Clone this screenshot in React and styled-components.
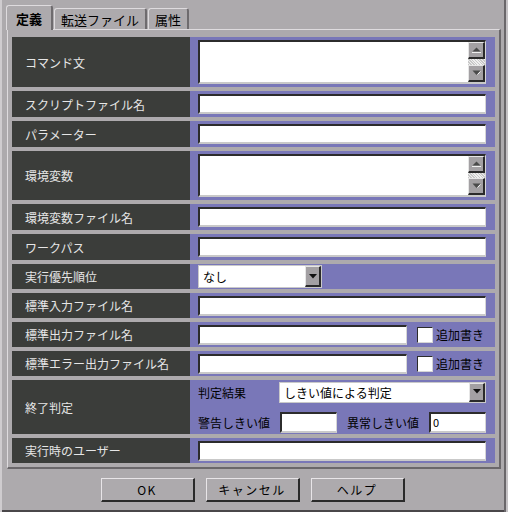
import React from "react";
import styled, { createGlobalStyle } from "styled-components";

const FONT = '"Noto Sans CJK JP", "Noto Sans", "DejaVu Sans", sans-serif';

const GlobalStyle = createGlobalStyle`
  html, body { margin: 0; padding: 0; background: #adaaad; }
  body { font-family: ${FONT}; }
  * { box-sizing: border-box; }
`;

const Window = styled.div`
  width: 508px;
  height: 512px;
  background: #adaaad;
  border-left: 2px solid #cfcccf;
  padding: 4px 7px 0 5px;
  display: flex;
  flex-direction: column;
  box-shadow: inset -2px 0 0 #c4c1c4, inset -4px 0 0 #6a676a,
    inset 0 -2px 0 #4a474a;
  font-family: ${FONT};
`;

const TabBar = styled.div`
  display: flex;
  align-items: flex-end;
  height: 25px;
  margin-left: -1px;
  position: relative;
  z-index: 1;
`;

const Tab = styled.div`
  height: ${(p) => (p.$active ? 25 : 21)}px;
  padding: 0 ${(p) => (p.$active ? 9 : 6)}px;
  margin-right: 1px;
  display: flex;
  align-items: center;
  font-size: 13px;
  font-weight: ${(p) => (p.$active ? 700 : 400)};
  color: #000;
  background: #adaaad;
  border-top: 1px solid #dedbde;
  border-left: 1px solid #dedbde;
  border-right: 2px solid #6e6b6e;
  border-radius: 3px 3px 0 0;
  margin-bottom: ${(p) => (p.$active ? -1 : 0)}px;
  line-height: 1;
`;

const Panel = styled.div`
  border-top: 1px solid #dedbde;
  border-left: 1px solid #dedbde;
  border-right: 2px solid #6a676a;
  border-bottom: 2px solid #6a676a;
  padding: 7px 4px 4px 4px;
`;

const Table = styled.div`
  display: flex;
  flex-direction: column;
  gap: 4px;
`;

const Row = styled.div`
  display: grid;
  grid-template-columns: 178px 305px;
  height: ${(p) => p.$h}px;
`;

const Label = styled.div`
  background: #3b3d3a;
  color: #e6e6e6;
  font-size: 12px;
  display: flex;
  align-items: center;
  padding-left: 13px;
  white-space: nowrap;
`;

const Cell = styled.div`
  background: #7977b8;
  display: flex;
  flex-direction: ${(p) => (p.$column ? "column" : "row")};
  align-items: ${(p) => (p.$column ? "stretch" : "center")};
  justify-content: ${(p) => (p.$column ? "center" : "flex-start")};
  padding-left: 8px;
  padding-right: 9px;
  gap: ${(p) => (p.$column ? 9 : 0)}px;
`;

const Field = styled.input`
  width: ${(p) => p.$w}px;
  height: ${(p) => p.$h || 20}px;
  background: #fff;
  border-top: 2px solid #2c2c2c;
  border-left: 2px solid #2c2c2c;
  border-right: 1px solid #d6d6d6;
  border-bottom: 2px solid #c9c9c9;
  padding: 0 2px;
  font-family: ${FONT};
  font-size: 11px;
  color: #000;
  outline: none;
  flex: none;
`;

const AreaBox = styled.div`
  width: ${(p) => p.$w}px;
  height: ${(p) => p.$h}px;
  background: #fff;
  border-top: 2px solid #2c2c2c;
  border-left: 2px solid #2c2c2c;
  border-right: 1px solid #d6d6d6;
  border-bottom: 2px solid #c9c9c9;
  display: flex;
  justify-content: flex-end;
`;

const ScrollBar = styled.div`
  width: 17px;
  display: flex;
  flex-direction: column;
`;

const ScrollTrack = styled.div`
  flex: 1;
  background-color: #e4e4e4;
  background-image: repeating-linear-gradient(
    45deg,
    #c8c8c8 0 1px,
    #efefef 1px 2px
  );
`;

const BevelButton = styled.div`
  width: ${(p) => p.$w || 17}px;
  height: ${(p) => p.$h || 17}px;
  background: #a3a0a3;
  border-top: 1px solid #e6e6e6;
  border-left: 1px solid #e6e6e6;
  border-right: 2px solid #2a2a2a;
  border-bottom: 2px solid #2a2a2a;
  display: flex;
  align-items: center;
  justify-content: center;
  flex: none;
`;

const Select = styled.div`
  width: ${(p) => p.$w}px;
  height: ${(p) => p.$h}px;
  background: #fff;
  border: 1px solid #c9c9c9;
  display: flex;
  align-items: stretch;
  flex: none;
`;

const SelectText = styled.div`
  flex: 1;
  font-size: 12px;
  color: #000;
  display: flex;
  align-items: center;
  padding-left: 4px;
  white-space: nowrap;
`;

const Line = styled.div`
  display: flex;
  align-items: center;
  height: 21px;
`;

const InlineText = styled.span`
  font-size: 12px;
  color: #000;
  white-space: nowrap;
  width: ${(p) => (p.$w ? `${p.$w}px` : "auto")};
  flex: none;
  margin-left: ${(p) => p.$ml || 0}px;
`;

const Check = styled.div`
  width: 16px;
  height: 16px;
  background: #fff;
  border-top: 1px solid #2c2c2c;
  border-left: 1px solid #2c2c2c;
  border-right: 1px solid #d6d6d6;
  border-bottom: 1px solid #d6d6d6;
  margin-left: 10px;
  margin-right: 3px;
  flex: none;
`;

const Buttons = styled.div`
  display: flex;
  justify-content: center;
  gap: 11px;
  margin-top: 9px;
  margin-left: -3px;
`;

const PushButton = styled.div`
  width: 94px;
  height: 24px;
  background: #adaaad;
  border-top: 1px solid #e8e5e8;
  border-left: 1px solid #e8e5e8;
  border-right: 2px solid #2a2a2a;
  border-bottom: 2px solid #2a2a2a;
  display: flex;
  align-items: center;
  justify-content: center;
  font-size: 12px;
  letter-spacing: 1.5px;
  color: #000;
`;

const Up = () => (
  <svg width="9" height="6" viewBox="0 0 9 6">
    <path d="M4.5 0.5 L8.5 4.5 L0.5 4.5 Z" fill="#4a4a4a" />
    <rect x="0" y="5" width="9" height="1" fill="#f0f0f0" />
  </svg>
);

const Down = () => (
  <svg width="9" height="6" viewBox="0 0 9 6">
    <path d="M0.5 0.5 L8.5 0.5 L4.5 5 Z" fill="#4a4a4a" />
    <path d="M5.5 4.5 L8.5 1.5" stroke="#f0f0f0" strokeWidth="1" />
  </svg>
);

const DropArrow = () => (
  <svg width="8" height="5" viewBox="0 0 8 5">
    <path d="M0 0 L8 0 L4 4.5 Z" fill="#111" />
  </svg>
);

const TextArea = ({ w, h }) => (
  <AreaBox $w={w} $h={h}>
    <ScrollBar>
      <BevelButton>
        <Up />
      </BevelButton>
      <ScrollTrack />
      <BevelButton>
        <Down />
      </BevelButton>
    </ScrollBar>
  </AreaBox>
);

const Dropdown = ({ w, h, text }) => (
  <Select $w={w} $h={h}>
    <SelectText>{text}</SelectText>
    <BevelButton $w={16} $h={h - 2}>
      <DropArrow />
    </BevelButton>
  </Select>
);

export default function App() {
  return (
    <>
      <GlobalStyle />
      <Window>
        <TabBar>
          <Tab $active>定義</Tab>
          <Tab>転送ファイル</Tab>
          <Tab>属性</Tab>
        </TabBar>
        <Panel>
          <Table>
            <Row $h={50}>
              <Label>コマンド文</Label>
              <Cell>
                <TextArea w={288} h={44} />
              </Cell>
            </Row>
            <Row $h={26}>
              <Label>スクリプトファイル名</Label>
              <Cell>
                <Field $w={288} readOnly />
              </Cell>
            </Row>
            <Row $h={26}>
              <Label>パラメーター</Label>
              <Cell>
                <Field $w={288} readOnly />
              </Cell>
            </Row>
            <Row $h={49}>
              <Label>環境変数</Label>
              <Cell>
                <TextArea w={288} h={43} />
              </Cell>
            </Row>
            <Row $h={26}>
              <Label>環境変数ファイル名</Label>
              <Cell>
                <Field $w={288} readOnly />
              </Cell>
            </Row>
            <Row $h={26}>
              <Label>ワークパス</Label>
              <Cell>
                <Field $w={288} readOnly />
              </Cell>
            </Row>
            <Row $h={25}>
              <Label>実行優先順位</Label>
              <Cell>
                <Dropdown w={124} h={23} text="なし" />
              </Cell>
            </Row>
            <Row $h={25}>
              <Label>標準入力ファイル名</Label>
              <Cell>
                <Field $w={288} readOnly />
              </Cell>
            </Row>
            <Row $h={25}>
              <Label>標準出力ファイル名</Label>
              <Cell>
                <Field $w={209} readOnly />
                <Check />
                <InlineText>追加書き</InlineText>
              </Cell>
            </Row>
            <Row $h={25}>
              <Label>標準エラー出力ファイル名</Label>
              <Cell>
                <Field $w={209} readOnly />
                <Check />
                <InlineText>追加書き</InlineText>
              </Cell>
            </Row>
            <Row $h={54}>
              <Label>終了判定</Label>
              <Cell $column>
                <Line>
                  <InlineText $w={81}>判定結果</InlineText>
                  <Dropdown w={207} h={21} text="しきい値による判定" />
                </Line>
                <Line>
                  <InlineText $w={82}>警告しきい値</InlineText>
                  <Field $w={57} $h={21} readOnly />
                  <InlineText $w={82} $ml={10}>
                    異常しきい値
                  </InlineText>
                  <Field $w={57} $h={21} readOnly defaultValue="0" />
                </Line>
              </Cell>
            </Row>
            <Row $h={25}>
              <Label>実行時のユーザー</Label>
              <Cell>
                <Field $w={288} readOnly />
              </Cell>
            </Row>
          </Table>
        </Panel>
        <Buttons>
          <PushButton>OK</PushButton>
          <PushButton>キャンセル</PushButton>
          <PushButton>ヘルプ</PushButton>
        </Buttons>
      </Window>
    </>
  );
}
